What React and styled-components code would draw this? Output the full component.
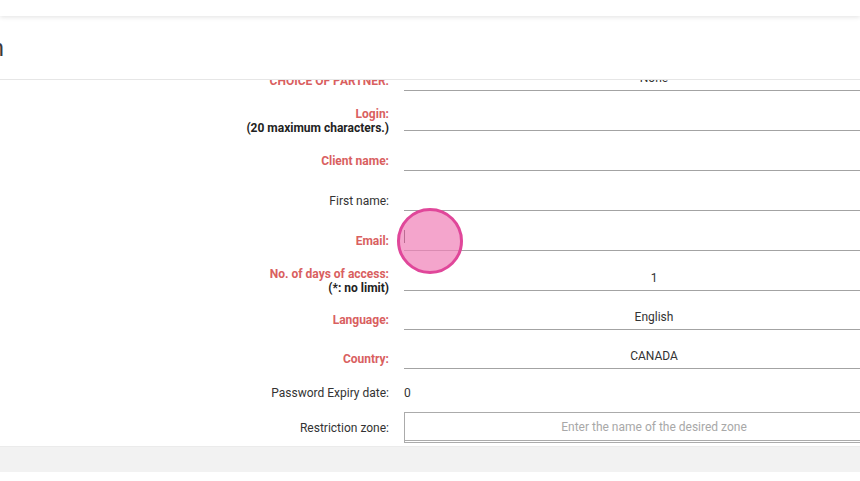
import styled, { createGlobalStyle } from "styled-components"

const Global = createGlobalStyle`
  html, body {
    margin: 0;
    padding: 0;
    background: #fff;
    overflow: hidden;
  }
  body {
    font-family: Roboto, "Liberation Sans", sans-serif;
    color: #333;
  }
`

const rows = [
    { label: "CHOICE OF PARTNER:", required: true, value: "None", height: 40 },
    { label: "Login:", note: "(20 maximum characters.)", required: true, value: "", height: 40 },
    { label: "Client name:", required: true, value: "", height: 40 },
    { label: "First name:", value: "", height: 40 },
    { label: "Email:", required: true, value: "", caret: true, height: 40 },
    { label: "No. of days of access:", note: "(*: no limit)", required: true, value: "1", height: 40 },
    { label: "Language:", required: true, value: "English", height: 39 },
    { label: "Country:", required: true, value: "CANADA", height: 39 },
]

const App = () => {
    return (
        <Page>
            <Global />
            <TopBar />
            <Header>
                <TitleClip>
                    <Title>Client creation</Title>
                </TitleClip>
            </Header>

            <FormArea>
                <FormList>
                    {rows.map((r) => (
                        <Row key={r.label} $h={r.height}>
                            <LabelCell>
                                <Label $required={r.required}>
                                    {r.label}
                                    {r.note && <Note>{r.note}</Note>}
                                </Label>
                            </LabelCell>
                            <Field>
                                {r.caret && <Caret />}
                                {r.value}
                            </Field>
                        </Row>
                    ))}

                    <Row $h={34}>
                        <LabelCell>
                            <Label>Password Expiry date:</Label>
                        </LabelCell>
                        <PlainValue>0</PlainValue>
                    </Row>

                    <BoxRow>
                        <LabelCell>
                            <Label>Restriction zone:</Label>
                        </LabelCell>
                        <ZoneBox>Enter the name of the desired zone</ZoneBox>
                    </BoxRow>
                </FormList>
            </FormArea>

            <Footer />
            <Touch />
        </Page>
    )
}

export default App

const Page = styled.div`
    position: relative;
    width: 860px;
    height: 481px;
    overflow: hidden;
    background: #fff;
`

const TopBar = styled.div`
    position: relative;
    z-index: 2;
    height: 16px;
    background: #fff;
    box-shadow: 0 1px 5px rgba(0, 0, 0, 0.12);
`

const Header = styled.div`
    height: 61px;
    display: flex;
    align-items: center;
    padding-top: 2px;
    border-bottom: 1px solid #e6e6e6;
    background: #fff;
`

const TitleClip = styled.div`
    width: 4px;
    display: flex;
    justify-content: flex-end;
`

const Title = styled.h1`
    margin: 0;
    font-size: 23px;
    font-weight: 400;
    color: #3a3a3a;
    white-space: nowrap;
`

const FormArea = styled.div`
    height: 366px;
    overflow: hidden;
`

const FormList = styled.div`
    margin-top: -29px;
    display: flex;
    flex-direction: column;
`

const Row = styled.div`
    height: ${(p) => p.$h}px;
    display: flex;
    align-items: flex-end;
    gap: 15px;
`

const LabelCell = styled.div`
    width: 389px;
    height: 20px;
    flex-shrink: 0;
    display: flex;
    align-items: center;
    justify-content: flex-end;
`

const Label = styled.div`
    font-size: 12px;
    line-height: 14px;
    text-align: right;
    white-space: nowrap;
    font-weight: ${(p) => (p.$required ? 700 : 400)};
    color: ${(p) => (p.$required ? "#d9605f" : "#333")};
`

const Note = styled.div`
    font-weight: 700;
    color: #222;
`

const Field = styled.div`
    position: relative;
    width: 500px;
    height: 26px;
    flex-shrink: 0;
    box-sizing: border-box;
    border-bottom: 1px solid #a3a3a3;
    font-size: 12px;
    line-height: 26px;
    text-align: center;
    color: #333;
`

const Caret = styled.span`
    position: absolute;
    left: 0;
    top: 5px;
    width: 1px;
    height: 13px;
    background: #333;
`

const PlainValue = styled.div`
    height: 20px;
    display: flex;
    align-items: center;
    font-size: 12px;
    color: #333;
`

const BoxRow = styled.div`
    height: 43px;
    box-sizing: border-box;
    padding: 9px 0 3px;
    display: flex;
    align-items: center;
    gap: 15px;
`

const ZoneBox = styled.div`
    width: 500px;
    height: 31px;
    flex-shrink: 0;
    box-sizing: border-box;
    border: 1px solid #ababab;
    border-bottom: 3px double #ababab;
    font-size: 12px;
    line-height: 28px;
    text-align: center;
    color: #a8a8a8;
`

const Footer = styled.div`
    height: 25px;
    background: #f2f2f2;
    border-top: 1px solid #ebebeb;
`

const Touch = styled.div`
    position: absolute;
    left: 397px;
    top: 208px;
    width: 66px;
    height: 66px;
    box-sizing: border-box;
    border-radius: 50%;
    border: 3px solid #e0479a;
    background: rgba(240, 130, 185, 0.72);
`
